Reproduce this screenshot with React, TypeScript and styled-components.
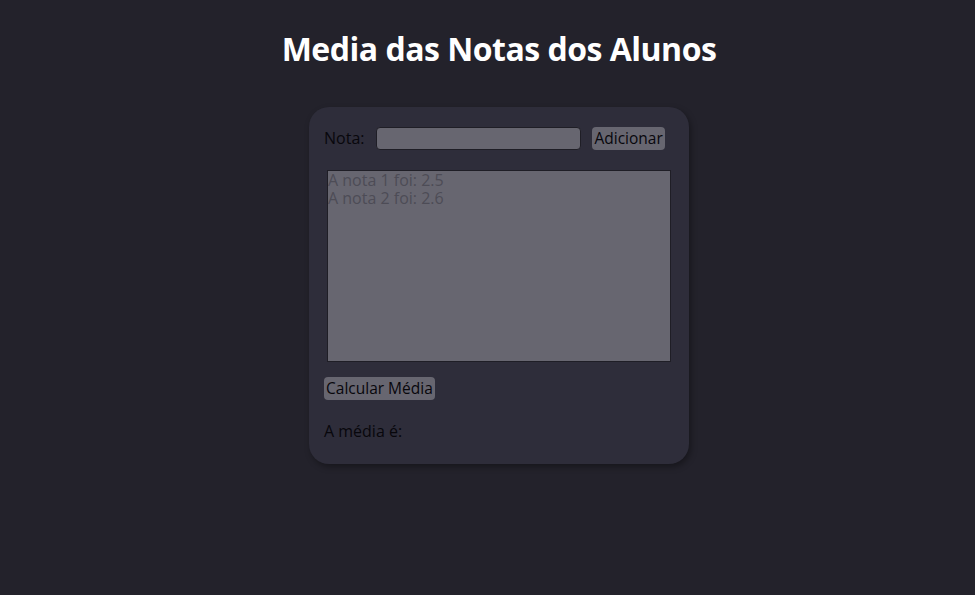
import React from "react";
import styled, { createGlobalStyle } from "styled-components";

const Global = createGlobalStyle`
  html, body { margin: 0; padding: 0; background: #23222b; }
  body { font-family: "Open Sans", "Liberation Sans", sans-serif; }
`;

const Page = styled.main`
  min-height: 595px;
  display: flex;
  flex-direction: column;
  align-items: center;
  padding: 27px 0 0 23px;
  box-sizing: border-box;
`;

const Title = styled.h1`
  margin: 0 0 36px 0;
  color: #ffffff;
  font-size: 32px;
  font-weight: 700;
  line-height: 44px;
  letter-spacing: -0.5px;
`;

const Card = styled.section`
  width: 380px;
  box-sizing: border-box;
  background: #2e2d3a;
  border-radius: 20px;
  box-shadow: 2px 3px 6px rgba(0, 0, 0, 0.35);
  padding: 19px 15px 22px 15px;
  display: flex;
  flex-direction: column;
`;

const Row = styled.div`
  display: flex;
  align-items: center;
  height: 24px;
`;

const Label = styled.label`
  font-size: 16px;
  color: #08070c;
  margin-right: 12px;
`;

const Input = styled.input`
  width: 205px;
  height: 23px;
  box-sizing: border-box;
  background: #676670;
  border: 1px solid #1f1e26;
  border-radius: 4px;
  margin-right: 11px;
  outline: none;
`;

const Button = styled.button`
  font-family: inherit;
  font-size: 15.5px;
  color: #08070c;
  background: #676670;
  border: none;
  border-radius: 4px;
  padding: 0 2px;
  height: 23px;
  line-height: 23px;
  cursor: pointer;
`;

const Notes = styled.textarea`
  margin: 20px 0 0 3px;
  width: 344px;
  height: 192px;
  box-sizing: border-box;
  background: #676670;
  border: 1px solid #1f1e26;
  color: #4d4c56;
  font-family: inherit;
  font-size: 16px;
  line-height: 18px;
  padding: 0;
  resize: none;
  outline: none;
`;

const CalcRow = styled.div`
  margin-top: 15px;
  display: flex;
`;

const Result = styled.p`
  margin: 20px 0 0 0;
  font-size: 16px;
  color: #08070c;
`;

export default function App() {
  return (
    <>
      <Global />
      <Page>
        <Title>Media das Notas dos Alunos</Title>
        <Card>
          <Row>
            <Label>Nota:</Label>
            <Input type="text" />
            <Button>Adicionar</Button>
          </Row>
          <Notes readOnly value={"A nota 1 foi: 2.5\nA nota 2 foi: 2.6"} />
          <CalcRow>
            <Button>Calcular Média</Button>
          </CalcRow>
          <Result>A média é:</Result>
        </Card>
      </Page>
    </>
  );
}
